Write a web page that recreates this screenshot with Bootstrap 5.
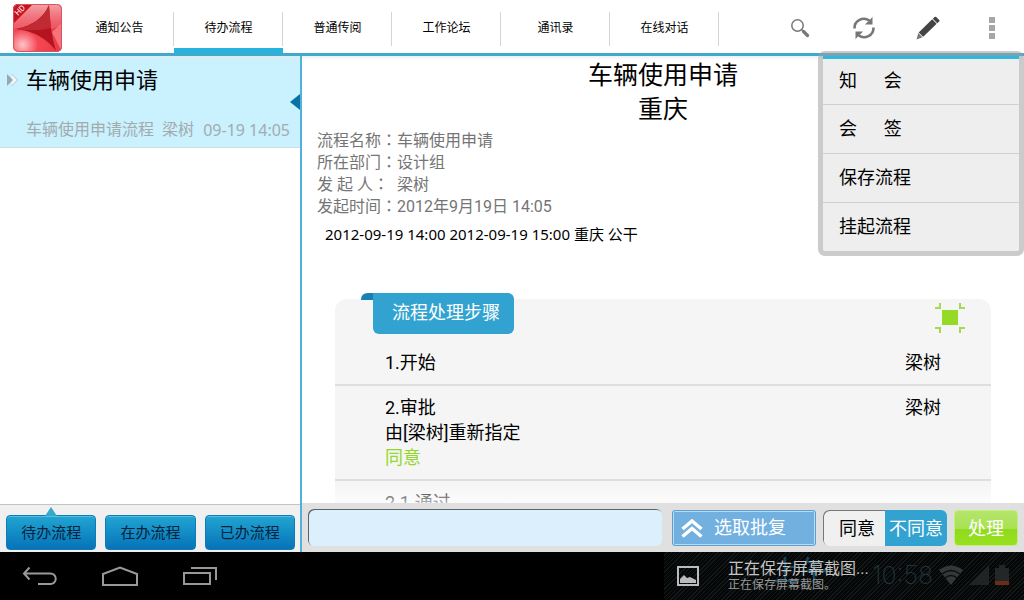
<!DOCTYPE html>
<html lang="zh-CN">
<head>
<meta charset="utf-8">
<meta name="viewport" content="width=device-width, initial-scale=1">
<title>待办流程</title>
<link href="https://cdn.jsdelivr.net/npm/bootstrap@5.3.0/dist/css/bootstrap.min.css" rel="stylesheet">
<style>
body{font-family:Roboto,"Noto Sans CJK SC",sans-serif;font-size:16px;line-height:22px;color:#000;background:#fff}
svg{display:block}
/* header */
.topbar{height:56px;border-bottom:3px solid #41a9cc;z-index:5}
.logo-box{width:65px;padding:4px 0 0 13px}
.tab-link{width:109px;height:53px;font-size:12px;line-height:56px;color:#000;text-align:center;text-decoration:none;background:linear-gradient(#d4d4d4,#d4d4d4) right 12px/1px 34px no-repeat;background-position:right 12px}
.tab-link.active{border-bottom:5px solid #27b3df}
.tool-btn{width:64px;height:53px;border:0;background:none;padding:2px 0 0}
.more-menu{top:51px;right:0;left:auto;width:206px;margin:0;padding:0;border:5px solid rgba(160,160,160,.55);border-radius:7px;background:#eee padding-box}
.more-menu .dropdown-item{height:49px;padding:0 16px;font-size:18px;line-height:48px;white-space:pre;color:#000;border-top:1px solid #d0d0d0}
.more-menu li:first-child .dropdown-item{height:48px;border-top:3px solid #33b5dd;line-height:43px}
/* list pane */
.side{width:302px;border-right:2px solid #52b1dc}
.entry{height:92px;padding-left:6px;background:linear-gradient(#d9eef5,#c9f1fe 5px);border-bottom:1px solid #d3dde0;color:#000;text-decoration:none}
.entry-body{padding:10px 10px 6px 8px}
.entry-title{font-size:22px;line-height:30px}
.entry-sub{color:#a3abae}
.wide-digits{font-family:"Noto Sans","Noto Sans CJK SC",sans-serif}
.entry-notch{right:0;top:38px}
.side-foot{height:48px;padding:10px 5px 3px 6px;gap:9px;border-top:1px solid #c4c4c4;background:#f0f0f0}
.blue-btn{height:35px;padding:0;border:1px solid #1079b8;border-radius:4px;font-size:15px;line-height:35px;color:#03233a;background:linear-gradient(#21a5d2,#0673b9);box-shadow:inset 0 1px #59bfe0}
.blue-btn svg{left:50%;margin-left:-6px;top:-9px}
/* detail pane */
.detail{background:linear-gradient(#e9f1f5,#fff 4px)}
.doc-title{font-size:25px;line-height:34px;padding-top:3px}
.meta-block{color:#757575;padding:3px 15px 0}
.meta-block dt{font-weight:400;width:80px;white-space:pre}
.mid-colon{font-family:"Noto Sans CJK TC",sans-serif;line-height:0}
.fields{font-size:15px;padding:5px 23px 0}
.steps{margin:54px 33px 0;background:#f5f5f5;border-radius:12px 12px 0 0;font-size:18px;line-height:25px}
.ribbon{margin:-6px 0 0 38px;width:141px;height:41px;border-radius:0 6px 6px 6px;background:#32a3d1;color:#fff;font-size:18px;line-height:39px;padding-left:19px}
.ribbon-fold{left:-12px;top:0}
.expand-btn{border:0;background:none;padding:0;margin:4px 26px 0 0}
.step{padding:9px 50px 9px 50px;border-bottom:2px solid #dedede}
.step:first-child{padding-top:16px}
.step:last-child{border:0}
.agreed{color:#93d72a}
.fade-out{height:20px;bottom:0;background:linear-gradient(rgba(255,255,255,0),rgba(255,255,255,.7))}
.action-bar{height:49px;padding:0 6px;background:#e0e0e0}
.reply-box{height:37px;border:0;border-radius:6px;background:#dceffd;box-shadow:inset 1px 1px #59636c;margin-right:10px}
.pick-btn{width:144px;height:36px;padding:0 0 0 8px;gap:11px;border:1px solid #5b9fd3;border-radius:3px;background:#72b0df;box-shadow:inset 0 0 0 1px #b9dbf4;color:#fff;font-size:18px;margin-right:7px}
.choice{width:124px;height:36px;border-radius:6px;overflow:hidden;margin-right:7px}
.choice label{flex:0 0 50%;padding:0;border:0;border-radius:0;font-size:18px;line-height:38px;color:#000;background:#f0f0f0;white-space:nowrap}
.choice label.agree{box-shadow:inset 1px 1px #777;border-radius:6px 0 0 6px;padding-left:6px}
.btn-check:checked+label.btn{color:#fff;background:#32a3d1}
.go-btn{width:64px;height:36px;padding:0;border:1px solid #c4ee82;border-radius:4px;background:linear-gradient(#b4e56c,#a8e252 52%,#8fda1f 53%,#98e01f);color:#fff;font-size:18px;line-height:36px}
/* system bar */
.sysbar{height:48px;background:#000}
.nav-key{border:0;background:none;padding:0;width:80px;height:48px}
.notice{width:360px;padding-left:13px;background:repeating-linear-gradient(135deg,#050606 0 2px,#13191b 2px 3px)}
.notice-text{margin-left:29px}
.notice-title{font-size:16px;line-height:18px;color:#c4c4c4}
.notice-note{font-size:12px;line-height:14px;color:#999}
.status{right:15px;top:0;height:46px;gap:6px}
.status-ampm{font-size:28px;line-height:36px;color:#144a60;right:196px;top:2px}
.status-clock{font-family:Inter,sans-serif;font-weight:200;font-size:25px;color:#20343b}
</style>
</head>
<body class="vh-100 d-flex flex-column overflow-hidden">

<header class="topbar d-flex flex-shrink-0 position-relative bg-white">
  <div class="logo-box flex-shrink-0">
    <svg width="49" height="49" viewBox="0 0 49 49" role="img" aria-label="HD">
      <defs>
        <radialGradient id="lg" cx=".2" cy=".85" r=".9"><stop offset="0" stop-color="#ffc4c8"/><stop offset=".35" stop-color="#f44653"/><stop offset="1" stop-color="#e83643"/></radialGradient>
        <linearGradient id="lt" x2="0" y2="1"><stop offset="0" stop-color="#f3a3a8"/><stop offset="1" stop-color="#ef6670" stop-opacity=".5"/></linearGradient>
        <clipPath id="lc"><rect width="49" height="48" rx="5"/></clipPath>
      </defs>
      <g clip-path="url(#lc)">
        <rect width="49" height="48" fill="url(#lg)"/>
        <path d="M0 0h49v22Q24 30 0 24z" fill="url(#lt)"/>
        <path d="M39 28l9 18V20z" fill="#ff9aa0" opacity=".6"/>
        <path d="M3 25Q28 20 36 1Q37 28 43 47Q29 28 3 25z" fill="#b3141f"/>
        <path d="M3 25Q28 20 36 1L38 24Q22 28 3 25z" fill="#c02a33"/>
        <path d="M0 0h20L0 20z" fill="#c9101d"/>
        <text x="0" y="0" transform="translate(5 12) rotate(-45)" font-size="8" font-family="Roboto,sans-serif" fill="#fff">HD</text>
      </g>
      <rect x=".5" y=".5" width="48" height="47" rx="5" fill="none" stroke="#d9535c"/>
    </svg>
  </div>
  <nav class="d-flex flex-shrink-0">
    <a class="tab-link" href="#">通知公告</a>
    <a class="tab-link active" href="#" aria-current="page">待办流程</a>
    <a class="tab-link" href="#">普通传阅</a>
    <a class="tab-link" href="#">工作论坛</a>
    <a class="tab-link" href="#">通讯录</a>
    <a class="tab-link" href="#">在线对话</a>
  </nav>
  <div class="d-flex ms-auto">
    <button class="tool-btn d-flex align-items-center justify-content-center" type="button" aria-label="搜索">
      <svg width="20" height="20" viewBox="0 0 20 20" fill="none" stroke="#777"><circle cx="7.5" cy="7.5" r="5.7" stroke-width="1.5"/><path d="M11.7 11.7l2 2" stroke-width="1.5"/><path d="M13.5 13.5l4 4" stroke-width="3.2" stroke-linecap="round"/></svg>
    </button>
    <button class="tool-btn d-flex align-items-center justify-content-center" type="button" aria-label="刷新">
      <svg width="24" height="24" viewBox="0 0 24 24" fill="none" stroke="#777" stroke-width="2.6"><path d="M2.5 12.5A9.3 9.3 0 0 1 17.5 4.8M21.500 11.500A9.300 9.300 0 0 1 6.500 19.200"/><path d="M20.500 1v7.500h-7.500zM3.500 23v-7.500h7.500z" fill="#777" stroke="none"/></svg>
    </button>
    <button class="tool-btn d-flex align-items-center justify-content-center" type="button" aria-label="编辑">
      <svg width="24" height="24" viewBox="0 0 24 24" fill="#444"><path d="M16.200 3.300l4.500 4.500L7.200 20.700l-4.500-4.300z"/><path d="M16.800 2.700l1.800-1.700q.8-.7 1.600 0l3 3q.7.700 0 1.500l-1.900 1.800z"/><path d="M2.300 17l4.200 4.200L.5 23.500z" fill="#777"/></svg>
    </button>
    <button class="tool-btn d-flex align-items-center justify-content-center" type="button" aria-label="更多" aria-expanded="true">
      <svg width="6" height="22" fill="#a6a6a6"><path d="M0 0h6v6H0zM0 8h6v6H0zM0 16h6v6H0z"/></svg>
    </button>
  </div>
  <ul class="dropdown-menu more-menu show">
    <li><a class="dropdown-item" href="#">知      会</a></li>
    <li><a class="dropdown-item" href="#">会      签</a></li>
    <li><a class="dropdown-item" href="#">保存流程</a></li>
    <li><a class="dropdown-item" href="#">挂起流程</a></li>
  </ul>
</header>

<div class="d-flex flex-grow-1 overflow-hidden">
  <aside class="side d-flex flex-column flex-shrink-0">
    <a class="entry d-flex position-relative" href="#">
      <svg class="flex-shrink-0 mt-3" width="12" height="16" viewBox="0 0 12 16"><path d="M5.500 2l6 6-6 6" fill="#eef9fd" stroke="#b4c4ca"/><path d="M1 2l6 6-6 6z" fill="#9ba7ab"/></svg>
      <div class="entry-body d-flex flex-column justify-content-between flex-grow-1">
        <div class="entry-title">车辆使用申请</div>
        <div class="entry-sub d-flex gap-2 text-nowrap"><span>车辆使用申请流程</span><span>梁树</span><span class="wide-digits ms-auto">09-19 14:05</span></div>
      </div>
      <svg class="entry-notch position-absolute" width="10" height="16"><path d="M10 0v16L0 8z" fill="#0973a8"/></svg>
    </a>
    <div class="side-foot d-flex mt-auto">
      <button class="btn blue-btn flex-fill position-relative" type="button">待办流程<svg class="position-absolute" width="12" height="9"><path d="M6 0l6 9H0z" fill="#35a9c9"/></svg></button>
      <button class="btn blue-btn flex-fill" type="button">在办流程</button>
      <button class="btn blue-btn flex-fill" type="button">已办流程</button>
    </div>
  </aside>

  <main class="d-flex flex-column flex-grow-1 overflow-hidden">
    <div class="detail flex-grow-1 overflow-hidden position-relative">
      <h1 class="doc-title fw-normal text-center mb-0">车辆使用申请<br>重庆</h1>
      <dl class="meta-block mb-0">
        <div class="d-flex"><dt>流程名称<span class="mid-colon" lang="zh-TW">：</span></dt><dd class="mb-0">车辆使用申请</dd></div>
        <div class="d-flex"><dt>所在部门<span class="mid-colon" lang="zh-TW">：</span></dt><dd class="mb-0">设计组</dd></div>
        <div class="d-flex"><dt>发 起 人<span class="mid-colon" lang="zh-TW">：</span></dt><dd class="mb-0">梁树</dd></div>
        <div class="d-flex"><dt>发起时间<span class="mid-colon" lang="zh-TW">：</span></dt><dd class="mb-0">2012年9月19日 14:05</dd></div>
      </dl>
      <p class="fields wide-digits mb-0">2012-09-19 14:00 2012-09-19 15:00 重庆 公干</p>
      <section class="steps">
        <div class="d-flex justify-content-between align-items-start">
          <h2 class="ribbon fw-normal position-relative mb-0"><svg class="ribbon-fold position-absolute" width="12" height="7"><path d="M0 7Q0 0 7 0h5v7z" fill="#1a80b4"/></svg>流程处理步骤</h2>
          <button class="expand-btn" type="button" aria-label="展开">
            <svg width="30" height="30" viewBox="0 0 30 30"><path d="M7 7h16v15H7z" fill="#95da26"/><path d="M5 0v5H0M25 0v5h5M5 30v-5H0M25 30v-5h5" fill="none" stroke="#a3da50" stroke-width="2"/></svg>
          </button>
        </div>
        <div>
          <div class="step d-flex justify-content-between"><div>1.开始</div><div>梁树</div></div>
          <div class="step d-flex justify-content-between"><div>2.审批<br>由[梁树]重新指定<br><span class="agreed">同意</span></div><div>梁树</div></div>
          <div class="step">2.1.通过</div>
        </div>
      </section>
      <div class="fade-out position-absolute start-0 end-0"></div>
    </div>
    <form class="action-bar d-flex align-items-center flex-shrink-0">
      <input class="form-control reply-box flex-grow-1" type="text" aria-label="批复">
      <button class="btn pick-btn d-flex align-items-center flex-shrink-0" type="button">
        <svg width="22" height="20" viewBox="0 0 22 20" fill="none" stroke="#fff" stroke-width="3.500"><path d="M1.500 11L11 3l9.500 8M1.500 18.500L11 10.500l9.500 8"/></svg>选取批复
      </button>
      <div class="choice d-flex flex-shrink-0">
        <input class="btn-check" type="radio" name="opinion" id="yes"><label class="btn agree" for="yes">同意</label>
        <input class="btn-check" type="radio" name="opinion" id="no" checked><label class="btn" for="no">不同意</label>
      </div>
      <button class="btn go-btn flex-shrink-0" type="button">处理</button>
    </form>
  </main>
</div>

<footer class="sysbar d-flex flex-shrink-0">
  <button class="nav-key d-flex align-items-center justify-content-center" type="button" aria-label="返回"><svg width="36" height="20" viewBox="0 0 36 20" fill="none" stroke="#999" stroke-width="2"><path d="M7.500 1.500L2 7.500l5.500 6M2 7.500h26.500a5 5 0 0 1 0 10.500H16"/></svg></button>
  <button class="nav-key d-flex align-items-center justify-content-center" type="button" aria-label="主页"><svg width="36" height="20" viewBox="0 0 36 20" fill="none" stroke="#999" stroke-width="2"><path d="M1 8L18 1.500 35 8v11H1z"/></svg></button>
  <button class="nav-key d-flex align-items-center justify-content-center" type="button" aria-label="最近"><svg width="34" height="18" viewBox="0 0 34 18" fill="none" stroke="#999" stroke-width="2"><path d="M1 6h26v11H1zM8 1h25v12"/></svg></button>
  <div class="notice d-flex align-items-center ms-auto position-relative">
    <div class="status-ampm position-absolute" aria-hidden="true">上午</div>
    <div class="status d-flex align-items-center position-absolute" aria-hidden="true">
      <span class="status-clock">10:58</span>
      <svg width="24" height="20" viewBox="0 0 24 20"><path d="M0 5Q12-4 24 5L12 20z" fill="#343838"/><path d="M3 9q9-7 18 0M6 13q6-5 12 0" fill="none" stroke="#0b0e0e" stroke-width="1.500"/></svg>
      <svg width="20" height="20"><path d="M20 0v20H0z" fill="#202424"/></svg>
      <svg width="14" height="20"><path d="M4 0h6v3h4v13H0V3h4z" fill="#242727"/><path d="M0 16h14v4H0z" fill="#6b2d17"/></svg>
    </div>
    <svg width="22" height="20" viewBox="0 0 22 20"><path d="M1 1h20v18H1z" fill="none" stroke="#bbb" stroke-width="2"/><path d="M3 17v-4l4-4 3 3 3-1 6 3v3z" fill="#bbb"/></svg>
    <div class="notice-text position-relative">
      <div class="notice-title">正在保存屏幕截图...</div>
      <div class="notice-note">正在保存屏幕截图。</div>
    </div>
  </div>
</footer>

<script src="https://cdn.jsdelivr.net/npm/bootstrap@5.3.0/dist/js/bootstrap.bundle.min.js"></script>
</body>
</html>
